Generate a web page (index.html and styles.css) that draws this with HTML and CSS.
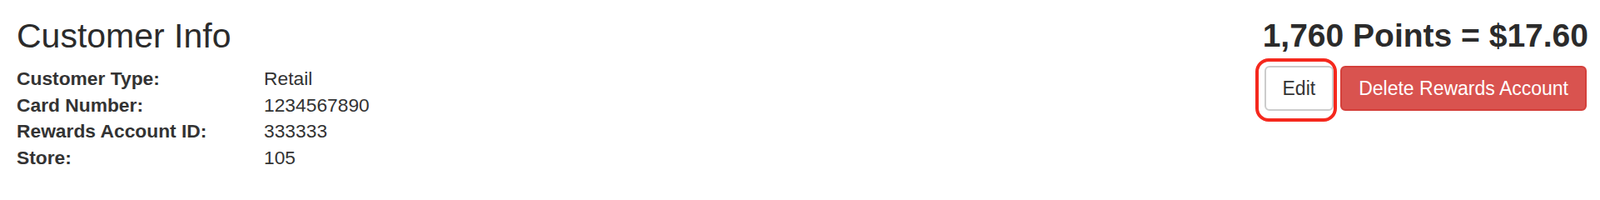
FILE: index.html
```html
<!DOCTYPE html>
<html lang="en">
<head>
<meta charset="utf-8">
<title>Customer Info</title>
<link rel="stylesheet" href="styles.css">
</head>
<body>
<div class="page">
  <section class="info">
    <h2 class="title">Customer Info</h2>
    <dl class="details">
      <dt>Customer Type:</dt><dd>Retail</dd>
      <dt>Card Number:</dt><dd>1234567890</dd>
      <dt>Rewards Account ID:</dt><dd>333333</dd>
      <dt>Store:</dt><dd>105</dd>
    </dl>
  </section>
  <section class="rewards">
    <h2 class="points">1,760 Points = $17.60</h2>
    <div class="actions">
      <span class="highlight-wrap">
        <button class="btn btn-default" type="button">Edit</button>
        <span class="highlight"></span>
      </span>
      <button class="btn btn-danger" type="button">Delete Rewards Account</button>
    </div>
  </section>
</div>
</body>
</html>
```

FILE: styles.css
```css
html, body {
  margin: 0;
  padding: 0;
  background: #ffffff;
}

body {
  font-family: "Liberation Sans", Arial, Helvetica, sans-serif;
  color: #333333;
}

.page {
  display: flex;
  justify-content: space-between;
  align-items: flex-start;
  padding: 21px 16px 0 20px;
}

.title {
  margin: 0;
  font-size: 41px;
  line-height: 44px;
  font-weight: normal;
  color: #2b2b2b;
}

.details {
  display: grid;
  grid-template-columns: 297px auto;
  margin: 14px 0 0 0;
  font-size: 22.8px;
  line-height: 31.7px;
}

.details dt {
  font-weight: bold;
  margin: 0;
}

.details dd {
  margin: 0;
}

.rewards {
  display: flex;
  flex-direction: column;
  align-items: flex-end;
}

.points {
  margin: 0 -2px 0 0;
  font-size: 39px;
  line-height: 44px;
  font-weight: bold;
  color: #2b2b2b;
}

.actions {
  display: flex;
  gap: 8px;
  margin-top: 14px;
}

.highlight-wrap {
  position: relative;
  display: flex;
}

.btn {
  font-family: "Liberation Sans", Arial, Helvetica, sans-serif;
  font-size: 23px;
  line-height: 32px;
  padding: 9px 20px;
  border: 2px solid transparent;
  border-radius: 6px;
  cursor: pointer;
  margin: 0;
}

.btn-default {
  background: #ffffff;
  color: #333333;
  border-color: #cccccc;
}

.btn-danger {
  background: #d9534f;
  color: #ffffff;
  border-color: #d43f3a;
}

.highlight {
  position: absolute;
  left: -11px;
  right: -4px;
  top: -9px;
  bottom: -13px;
  border: 4px solid #f5281d;
  border-radius: 16px;
  pointer-events: none;
}
```
